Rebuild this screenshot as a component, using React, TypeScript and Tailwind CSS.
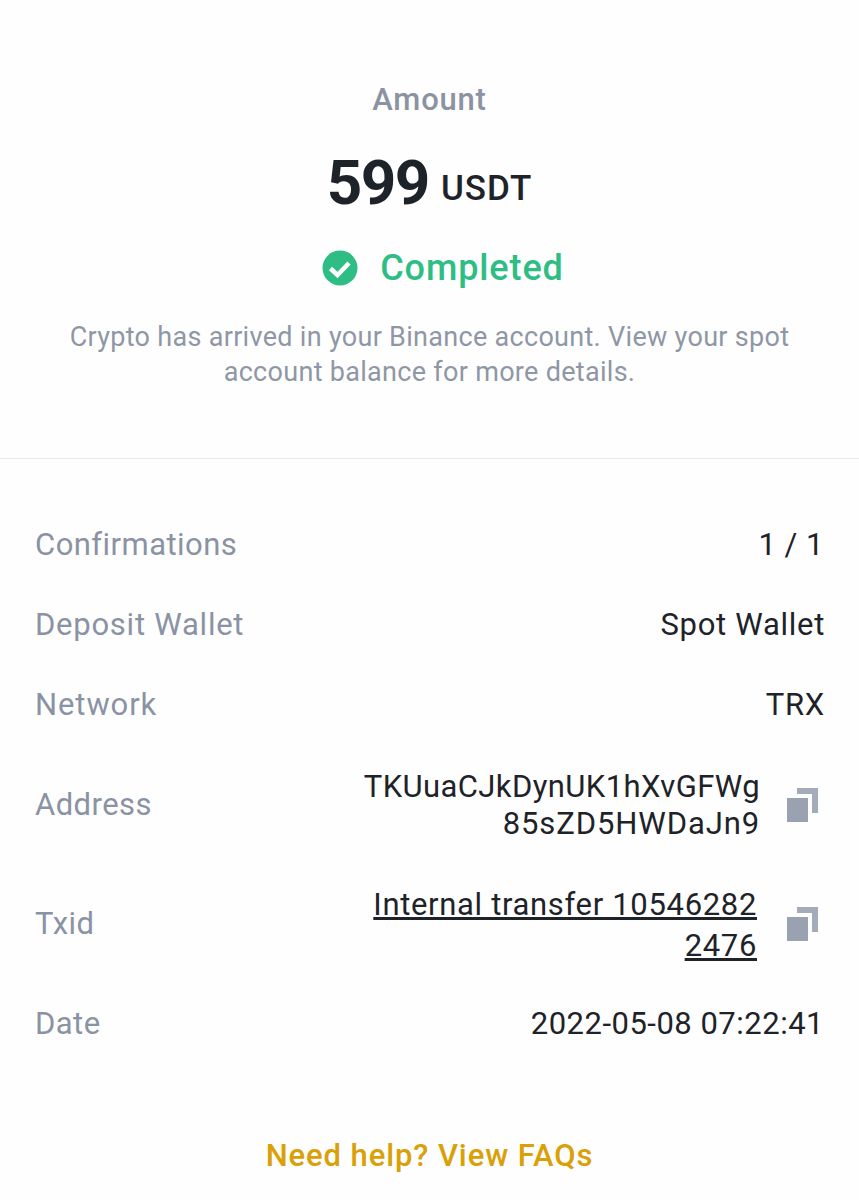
import React from 'react';

const font = "font-['Roboto',sans-serif]";

const CopyIcon = () => (
  <svg width="31" height="34" viewBox="0 0 31 34" className="shrink-0">
    <path d="M10 0h21v25h-6V6H10z" fill="#a5acb9" />
    <rect x="0" y="10" width="21" height="24" fill="#9aa2b1" />
  </svg>
);

const rows = [
  { label: 'Confirmations', labelTracking: 'tracking-[0.45px]', value: '1 / 1', valueClass: 'pr-[1px] tracking-[0.5px]' },
  { label: 'Deposit Wallet', labelTracking: 'tracking-[0.75px]', value: 'Spot Wallet', valueClass: 'tracking-[0.7px]' },
  { label: 'Network', labelTracking: 'tracking-[0.9px]', value: 'TRX', valueClass: 'tracking-[0.7px]' },
];

const Row = ({
  label,
  labelTracking = 'tracking-[0.45px]',
  children,
}: {
  label: string;
  labelTracking?: string;
  children: React.ReactNode;
}) => (
  <div className="flex items-center justify-between">
    <span className={`text-[31px] leading-[40px] text-[#8a93a3] ${labelTracking}`}>{label}</span>
    {children}
  </div>
);

export default function App() {
  return (
    <div className={`${font} w-[859px] h-[1200px] overflow-hidden bg-[#fefefe]`}>
      <div className="flex flex-col items-center h-[459px] border-b border-[#e8e8e8] pt-[80px]">
        <div className="text-[31px] leading-[40px] font-medium tracking-[0.8px] text-[#8b93a3]">Amount</div>
        <div className="flex items-baseline gap-[12px] mt-[30px] h-[66px] text-[#1e2329]">
          <span className="text-[62px] leading-[66px] font-bold tracking-[-1.5px]">599</span>
          <span className="text-[35px] leading-[66px] font-medium tracking-[1px] -translate-y-[4px]">USDT</span>
        </div>
        <div className="flex items-center gap-[22px] mt-[29px] ml-[27px]">
          <svg width="36" height="36" viewBox="0 0 36 36">
            <circle cx="18" cy="18" r="17.5" fill="#2ebd85" />
            <path d="M8.500 18.500l7 6.500 11.500-12" fill="none" stroke="#fff" strokeWidth="4.500" />
          </svg>
          <span className="text-[36px] leading-[46px] font-medium tracking-[0.9px] text-[#2ebd85]">Completed</span>
        </div>
        <div className="mt-[29px] w-[760px] text-center text-[27px] leading-[35px] tracking-[0.3px] text-[#8f97a6]">
          Crypto has arrived in your Binance account. View your spot account balance for more details.
        </div>
      </div>

      <div className="flex flex-col gap-[40px] pt-[66px] pl-[35px] pr-[34px]">
        {rows.map((row) => (
          <Row key={row.label} label={row.label} labelTracking={row.labelTracking}>
            <span className={`text-[31px] leading-[40px] text-[#1e2329] ${row.valueClass}`}>{row.value}</span>
          </Row>
        ))}
        <Row label="Address">
          <div className="flex items-center gap-[27px] pr-[7px]">
            <div className="text-right text-[31px] leading-[37px] tracking-[0.4px] text-[#1e2329] h-[79px] pt-[3px]">
              TKUuaCJkDynUK1hXvGFWg
              <br />
              <span className="tracking-[0.9px]">85sZD5HWDaJn9</span>
            </div>
            <CopyIcon />
          </div>
        </Row>
        <Row label="Txid">
          <div className="flex items-center gap-[30px] pr-[7px]">
            <div className="text-right text-[31px] leading-[41px] tracking-[0.67px] text-[#1e2329] underline h-[80px]">
              Internal transfer 10546282
              <br />
              2476
            </div>
            <CopyIcon />
          </div>
        </Row>
        <Row label="Date">
          <span className="text-[31px] leading-[40px] tracking-[0.5px] text-[#1e2329] pr-[1px]">2022-05-08 07:22:41</span>
        </Row>
      </div>

      <div className="mt-[92px] text-center text-[31px] leading-[40px] font-medium tracking-[0.9px] text-[#d9a008]">
        Need help? View FAQs
      </div>
    </div>
  );
}
